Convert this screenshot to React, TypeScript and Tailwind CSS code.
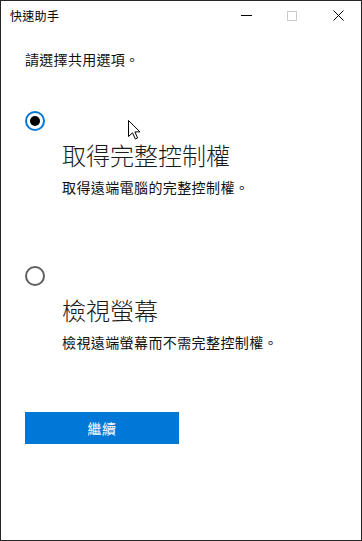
import React from "react";

const font = { fontFamily: '"Noto Sans CJK TC", "Noto Sans", sans-serif' };

function Radio({ checked }: { checked: boolean }) {
  if (checked) {
    return (
      <div className="w-5 h-5 rounded-full border-2 border-[#0078d7] flex items-center justify-center">
        <div className="w-[10px] h-[10px] rounded-full bg-black" />
      </div>
    );
  }
  return <div className="w-5 h-5 rounded-full border-2 border-[#5f5f5f]" />;
}

function Cursor() {
  return (
    <svg className="absolute left-[127px] top-[119px]" width="13" height="20" viewBox="0 0 13 20">
      <path
        d="M0.5 0.5 L0.5 16.5 L4.5 12.8 L7.3 19 L9.6 18 L6.9 11.9 L12 11.9 Z"
        fill="#fff"
        stroke="#000"
        strokeWidth="1"
        strokeLinejoin="miter"
      />
    </svg>
  );
}

function Option({
  checked,
  title,
  desc,
  className,
}: {
  checked: boolean;
  title: string;
  desc: string;
  className: string;
}) {
  return (
    <div className={className}>
      <Radio checked={checked} />
      <div className="pl-[37px] mt-2">
        <div className="text-[24px] leading-[32px] font-light text-[#1a1a1a]">{title}</div>
        <div className="mt-[6px] text-[14px] leading-[20px] tracking-[0.4px] text-[#111]">{desc}</div>
      </div>
    </div>
  );
}

export default function App() {
  return (
    <div className="relative w-[362px] h-[541px] bg-white border border-[#262626] flex flex-col" style={font}>
      <div className="h-[29px] flex items-center shrink-0">
        <span className="pl-[9px] text-[12px] tracking-[0.3px] text-black">快速助手</span>
        <div className="ml-auto flex items-center h-full">
          <div className="w-[46px] h-full flex items-center justify-center">
            <div className="w-[11px] h-px bg-black" />
          </div>
          <div className="w-[46px] h-full flex items-center justify-center">
            <div className="w-[10px] h-[10px] border border-[#cccccc]" />
          </div>
          <div className="w-[46px] h-full flex items-center justify-center">
            <svg width="11" height="11" viewBox="0 0 11 11">
              <path d="M0.5 0.5 L10.5 10.5 M10.5 0.5 L0.5 10.5" stroke="#000" strokeWidth="1" />
            </svg>
          </div>
        </div>
      </div>

      <div className="flex flex-col pl-[24px]">
        <p className="mt-[19px] text-[14px] leading-[20px] tracking-[0.3px] text-[#111]">請選擇共用選項。</p>

        <Option
          className="mt-[42px]"
          checked={true}
          title="取得完整控制權"
          desc="取得遠端電腦的完整控制權。"
        />

        <Option
          className="mt-[69px]"
          checked={false}
          title="檢視螢幕"
          desc="檢視遠端螢幕而不需完整控制權。"
        />

        <button className="mt-[60px] w-[154px] h-[32px] bg-[#0078d7] text-white text-[14px] tracking-[0.5px] flex items-center justify-center">
          繼續
        </button>
      </div>

      <Cursor />
    </div>
  );
}
